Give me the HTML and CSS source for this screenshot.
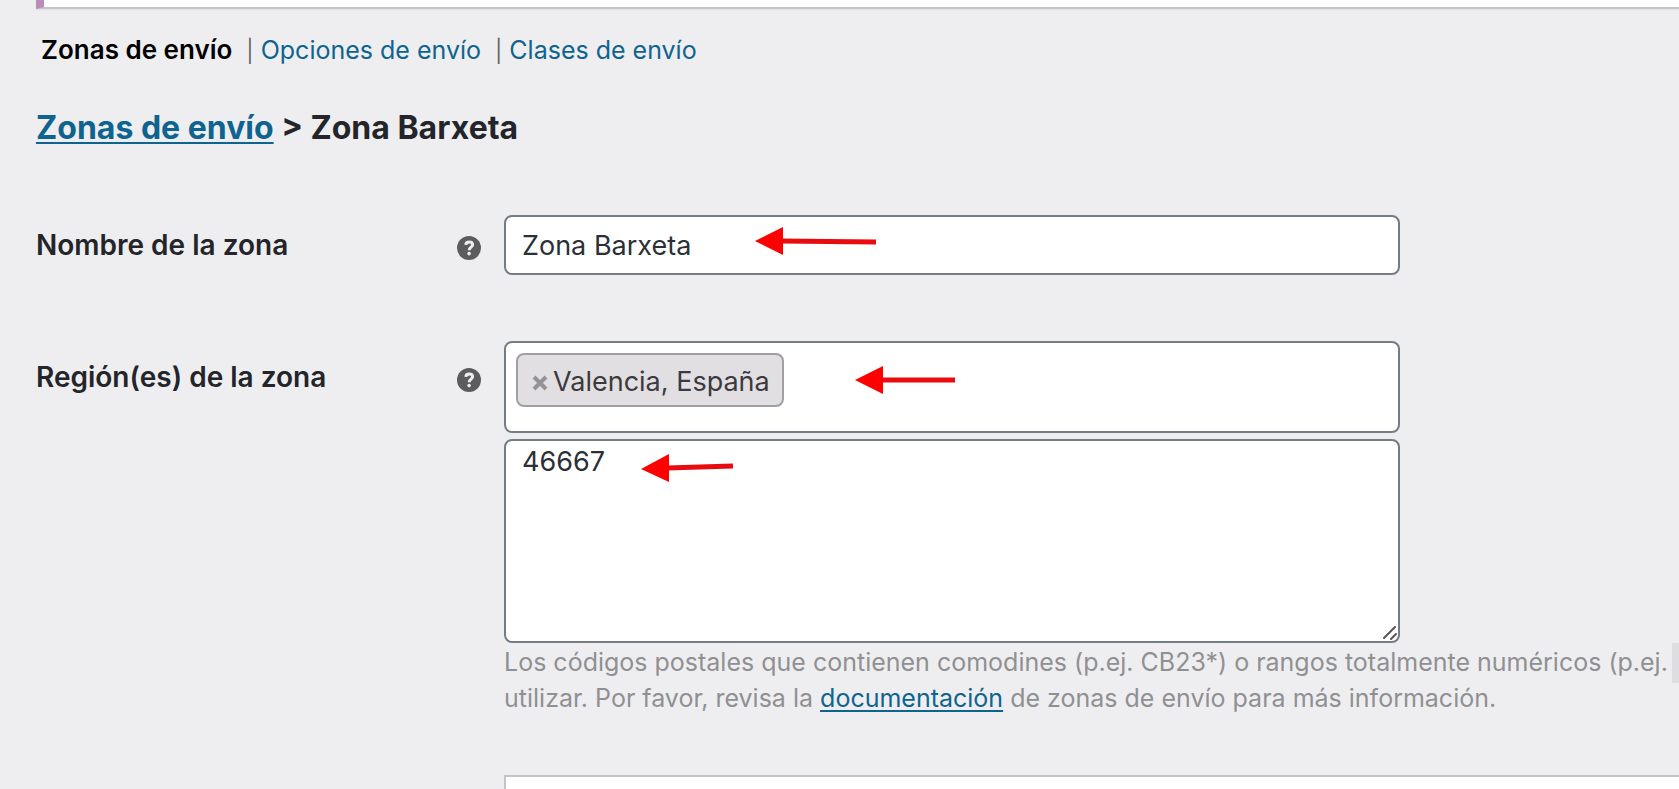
FILE: index.html
```html
<!DOCTYPE html>
<html lang="es">
<head>
<meta charset="utf-8">
<title>Zonas de envío</title>
<link rel="stylesheet" href="styles.css">
</head>
<body>
<div class="notice"></div>
<main class="content">
  <nav>
    <ul class="subnav">
      <li><a class="current" href="#">Zonas de envío</a></li>
      <li><span class="sep">|</span><a href="#">Opciones de envío</a></li>
      <li><span class="sep">|</span><a href="#">Clases de envío</a></li>
    </ul>
  </nav>
  <h2 class="title"><a href="#">Zonas de envío</a> &gt; Zona Barxeta</h2>

  <form class="form">
    <div class="row">
      <div class="head">
        <label for="zone-name">Nombre de la zona</label>
        <svg class="help" viewBox="0 0 24 24" aria-hidden="true"><circle cx="12" cy="12" r="12"/><path d="M8.8 8.9C8.9 6.800 10.200 5.900 12.200 5.900C14.300 5.900 15.600 6.900 15.600 8.700C15.600 11.200 12.200 11.200 12.200 14.200"/><circle class="dot" cx="12.100" cy="17.600" r="1.800"/></svg>
      </div>
      <div class="field">
        <input class="box name" id="zone-name" type="text" value="Zona Barxeta">
        <svg class="arrow arrow-name" viewBox="0 0 122 28" width="122" height="28" aria-hidden="true"><path class="shaft" d="M26 14L121 15"/><path d="M0 14L28 0V28Z"/></svg>
      </div>
    </div>

    <div class="row">
      <div class="head head-tall">
        <label for="zone-region">Región(es) de la zona</label>
        <svg class="help" viewBox="0 0 24 24" aria-hidden="true"><circle cx="12" cy="12" r="12"/><path d="M8.8 8.9C8.9 6.800 10.200 5.900 12.200 5.900C14.300 5.900 15.600 6.900 15.600 8.700C15.600 11.200 12.200 11.200 12.200 14.200"/><circle class="dot" cx="12.100" cy="17.600" r="1.800"/></svg>
      </div>
      <div class="field">
        <div class="box regions">
          <span class="chip"><button class="remove" type="button" aria-label="Quitar"><svg viewBox="0 0 16 16" width="16" height="16"><path d="M2 2L14 14M14 2L2 14"/></svg></button>Valencia, España</span>
          <input class="search" id="zone-region" type="text">
          <svg class="arrow arrow-region" viewBox="0 0 100 28" width="100" height="28" aria-hidden="true"><path class="shaft" d="M26 14H100"/><path d="M0 14L28 0V28Z"/></svg>
        </div>
        <div class="area">
          <textarea class="box codes" aria-label="Códigos postales">46667</textarea>
          <svg class="grip" viewBox="0 0 16 16" width="16" height="16" aria-hidden="true"><path d="M2 13L13 2M9 14L14 9"/></svg>
          <svg class="arrow arrow-codes" viewBox="0 0 92 28" width="92" height="28" aria-hidden="true"><path class="shaft" d="M26 14L92 12"/><path d="M0 15L28 0V28Z"/></svg>
        </div>
        <p class="description">Los códigos postales que contienen comodines (p.ej. CB23*) o rangos totalmente numéricos (p.ej. <code class="code"></code><br>utilizar. Por favor, revisa la <a href="#">documentación</a> de zonas de envío para más información.</p>
        <div class="methods"></div>
      </div>
    </div>
  </form>
</main>
</body>
</html>
```
FILE: styles.css
```css
* { box-sizing: border-box; }
html, body { height: 100%; }
body {
  margin: 0;
  overflow: hidden;
  background: #eeeef0;
  color: #23252a;
  font-family: Inter, "Liberation Sans", sans-serif;
  font-size: 25px;
  line-height: 36px;
}
a { color: #0f648f; }
.notice {
  height: 9px;
  margin-left: 36px;
  background: #fff;
  border-bottom: 2px solid #c3c4c7;
  border-left: 8px solid #bd8bb9;
  box-shadow: 0 1px 2px rgba(0, 0, 0, .06);
}
.content {
  height: calc(100% - 9px);
  padding-left: 36px;
  overflow: hidden;
}
.subnav {
  display: flex;
  gap: 14px;
  margin: 0;
  padding: 23px 0 0 5px;
  list-style: none;
}
.subnav a { text-decoration: none; }
.subnav .current { color: #000; font-size: 26px; font-weight: 600; }
.sep { margin-right: 7px; color: #666; font-size: 22px; }
.title {
  margin: 38px 0 0;
  font-size: 32px;
  font-weight: 700;
  line-height: 42px;
}
.title a, .description a { text-decoration-thickness: 2px; text-underline-offset: 3px; }
.form { display: grid; gap: 66px; margin-top: 66px; }
.row { display: grid; grid-template-columns: 468px minmax(0, 1fr); }
.head {
  display: flex;
  justify-content: space-between;
  align-items: flex-start;
  padding: 12px 23px 0 0;
  font-size: 28px;
  font-weight: 600;
}
.head-tall { padding-top: 18px; }
.help { width: 24px; height: 24px; margin-top: 9px; fill: #5c5c5e; }
.help path { fill: none; stroke: #eeeef0; stroke-width: 3; }
.help .dot { fill: #eeeef0; }
.field { position: relative; }
.box {
  display: block;
  width: 100%;
  max-width: 896px;
  background: #fff;
  border: 2px solid #757c83;
  border-radius: 8px;
  color: #2c3036;
  font: inherit;
  font-size: 27px;
}
.name { height: 60px; padding: 0 16px; }
.regions {
  position: relative;
  display: flex;
  align-items: flex-start;
  height: 92px;
  padding: 10px;
}
.chip {
  display: flex;
  align-items: center;
  height: 54px;
  padding: 3px 12px 0 14px;
  background: #e1dfe2;
  border: 2px solid #a0a0a2;
  border-radius: 8px;
  color: #3c3a3e;
  white-space: nowrap;
}
.remove {
  display: flex;
  margin: 2px 5px 0 0;
  padding: 0;
  background: none;
  border: 0;
}
.remove path { stroke: #949296; stroke-width: 4; }
.search {
  flex: 1;
  min-width: 0;
  height: 54px;
  background: none;
  border: 0;
}
.area { position: relative; max-width: 896px; margin-top: 6px; }
.codes { height: 204px; padding: 3px 16px; resize: none; }
.grip { position: absolute; right: 2px; bottom: 2px; }
.grip path { stroke: #555; stroke-width: 2; stroke-linecap: round; }
.arrow { position: absolute; fill: #f00; }
.shaft { stroke: #e80c10; stroke-width: 5; }
.arrow-name { left: 251px; top: 12px; }
.arrow-region { left: 349px; top: 23px; }
.arrow-codes { left: 137px; top: 15px; }
.description {
  margin: 0;
  padding-top: 1px;
  overflow: hidden;
  color: #909093;
  white-space: nowrap;
}
.code {
  display: inline-block;
  width: 180px;
  height: 42px;
  margin: -8px 0 -4px -3px;
  background: #dedee0;
  vertical-align: middle;
}
.methods {
  height: 120px;
  margin-top: 59px;
  background: #fff;
  border: 2px solid #c3c4c7;
  border-right: 0;
}
```
